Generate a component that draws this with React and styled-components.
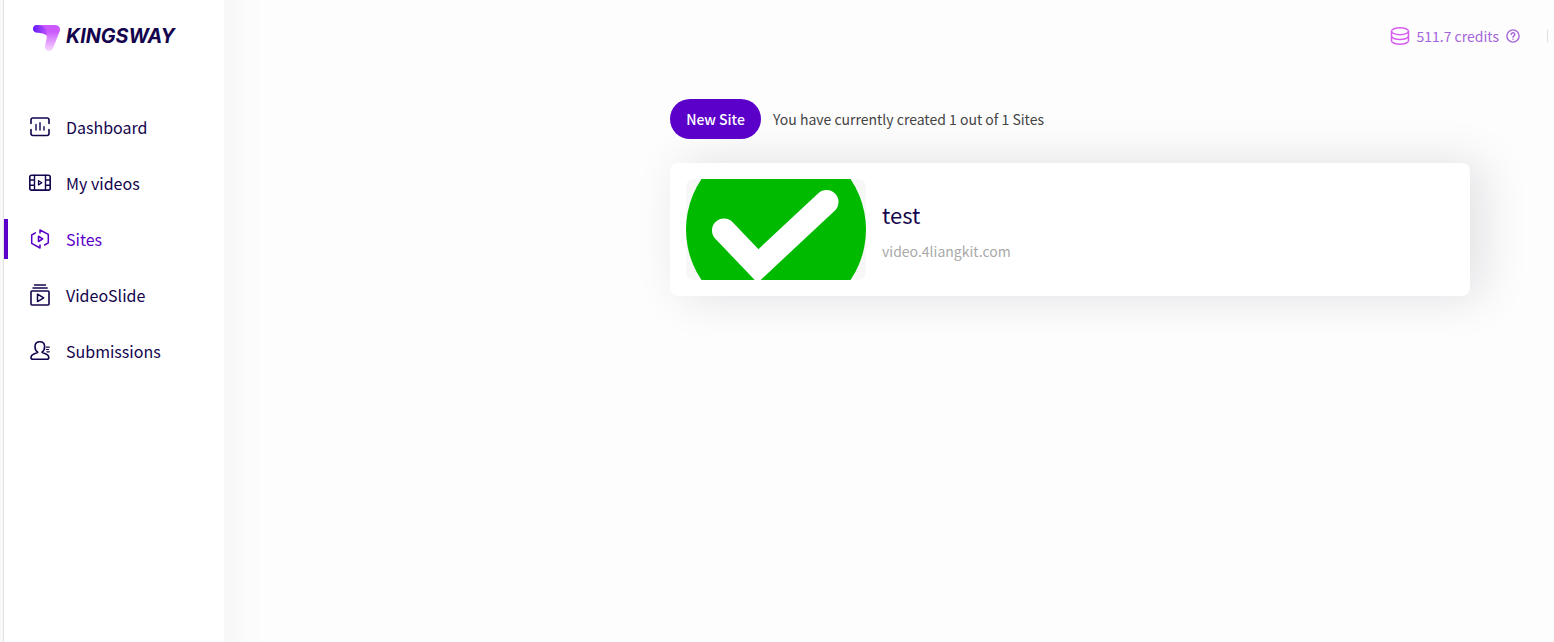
import React from 'react';
import styled, { createGlobalStyle } from 'styled-components';

const GlobalStyle = createGlobalStyle`
	* {
		box-sizing: border-box;
	}
	body {
		margin: 0;
		overflow: hidden;
		background-color: #fdfdfd;
		font-family: 'Noto Sans CJK SC', 'Noto Sans', sans-serif;
	}
	h2,
	p {
		margin: 0;
		font-weight: 400;
	}
`;
const WrapperStyled = styled.div`
	display: flex;
	height: 100vh;
	min-height: 642px;
	overflow: hidden;
	border-left: 3px solid #f8f8f8;
	background-color: #fdfdfd;
`;
const SidebarStyled = styled.aside`
	flex: 0 0 221px;
	margin: -60px 0;
	padding-top: 60px;
	border-left: 1px solid #e2e2e2;
	background-color: #fff;
	box-shadow: 10px 0 40px rgba(20, 20, 20, 0.034);
`;
const LogoStyled = styled.div`
	height: 99px;
	padding: 20px 0 0 26px;

	svg {
		display: block;
	}
`;
const NavStyled = styled.nav`
	display: flex;
	flex-direction: column;
	gap: 16px;
	padding-top: 8px;
	padding-bottom: 60px;
`;
const NavItemStyled = styled.a`
	display: flex;
	align-items: center;
	gap: 14px;
	height: 40px;
	padding-left: 20px;
	border-left: 4px solid ${({ $active }) => ($active ? '#5b00c9' : 'transparent')};
	color: ${({ $active }) => ($active ? '#5b00c9' : '#14044d')};
	font-size: 16px;
	line-height: 24px;
	cursor: pointer;

	svg {
		flex: none;
	}
`;
const ContentStyled = styled.div`
	flex: 1;
	display: flex;
	flex-direction: column;
`;
const HeaderStyled = styled.header`
	display: flex;
	justify-content: flex-end;
	align-items: center;
	height: 72px;
	padding-right: 6px;
`;
const CreditsStyled = styled.div`
	display: flex;
	align-items: center;
	gap: 6px;
	padding-right: 26px;
	color: #a565dc;
	font-size: 14px;
	line-height: 22px;

	svg:first-child {
		margin-right: 1px;
	}
`;
const DividerStyled = styled.span`
	width: 1px;
	height: 12px;
	background-color: #e0e0e3;
`;
const MainStyled = styled.main`
	width: 800px;
	margin: 27px 0 0 446px;
`;
const ToolbarStyled = styled.div`
	display: flex;
	align-items: center;
	gap: 12px;
	margin-bottom: 24px;
	color: #444;
	font-size: 14px;
	line-height: 22px;
`;
const ButtonStyled = styled.button`
	width: 91px;
	height: 40px;
	padding: 0;
	border: 0;
	border-radius: 20px;
	background-color: #5b00c9;
	color: #fff;
	font-family: inherit;
	font-size: 14px;
	font-weight: 500;
	line-height: 22px;
`;
const CardStyled = styled.section`
	display: flex;
	align-items: center;
	gap: 16px;
	height: 133px;
	padding: 16px;
	border-radius: 8px;
	background-color: #fff;
	box-shadow: 12px 0 48px rgba(20, 20, 43, 0.12);
`;
const ThumbStyled = styled.div`
	width: 180px;
	height: 101px;
	overflow: hidden;
	border-radius: 8px;
	background-color: #f7f7f8;

	svg {
		display: block;
	}
`;
const TitleStyled = styled.h2`
	margin-bottom: 10px;
	color: #14044d;
	font-size: 22px;
	line-height: 32px;
`;
const DomainStyled = styled.p`
	color: #a9a9a9;
	font-size: 14px;
	line-height: 22px;
`;

const Icon = ({ children, size = 24, width = 1.6 }) => (
	<svg
		width={size}
		height={size}
		viewBox={`0 0 ${size} ${size}`}
		fill="none"
		stroke="currentColor"
		strokeWidth={width}
		strokeLinecap="round"
		strokeLinejoin="round"
	>
		{children}
	</svg>
);

const DashboardIcon = () => (
	<Icon>
		<path d="M3 8.5V5Q3 3 5 3H19Q21 3 21 5V8.5M3 14.5V18.5Q3 20.5 5 20.5H19Q21 20.5 21 18.5V14.5" />
		<path d="M8 9.5V15M12 7.7V15M16 11.8V15" strokeWidth="1.4" />
	</Icon>
);
const VideosIcon = () => (
	<Icon>
		<rect x="1.8" y="4.3" width="20.4" height="14.8" rx="1.8" />
		<path d="M6.5 4.3V19.1M17.5 4.3V19.1M2 9H6.5M2 14.2H6.5M17.5 9H22M17.5 14.2H22" strokeWidth="1.4" />
		<path d="M10.5 9.7V13.9L13.8 11.8Z" strokeWidth="1.3" />
	</Icon>
);
const SitesIcon = () => (
	<Icon>
		<path d="M12 6V3L20.3 7.3V15.8L16.6 18M12 18V21L3.7 16.4V8L7.4 5.8" strokeWidth="1.5" />
		<path d="M10.5 9.3V14.5L14.7 11.9Z" />
	</Icon>
);
const SlideIcon = () => (
	<Icon>
		<rect x="3" y="8" width="18" height="14" rx="1" />
		<path d="M6.5 2H17.5M5 5H19.2" strokeWidth="1.4" />
		<path d="M9.5 11.2V18.6L15.7 14.9Z" strokeWidth="1.5" />
	</Icon>
);
const SubmissionsIcon = () => (
	<Icon>
		<path d="M9.8 13.2C7.7 12 7 9.8 7 7.5C7 4.3 9 2.8 11.8 2.8S16.6 4.3 16.6 7.5C16.6 9.8 15.9 12 14 13.2C14.5 14.5 20.8 14.3 20.8 18.5Q20.8 20.3 18.8 20.3H5Q3 20.3 3 18.5C3 14.3 9.3 14.5 9.8 13.2Z" />
		<path d="M18.3 8.2H21.3M18.3 10.5H20.6M18.8 12.8H21.3" strokeWidth="1.2" />
	</Icon>
);
const CoinsIcon = () => (
	<svg width="20" height="20" viewBox="0 0 20 20" fill="none" stroke="#d65cf0" strokeWidth="1.5">
		<ellipse cx="10" cy="5.2" rx="8.5" ry="3.5" />
		<path d="M1.5 5.2V14.8C1.5 16.8 5.3 18.3 10 18.3S18.5 16.8 18.5 14.8V5.2" />
		<path d="M1.5 10C1.5 12 5.3 13.5 10 13.5S18.5 12 18.5 10" />
	</svg>
);
const HelpIcon = () => (
	<Icon size={16} width={1.4}>
		<circle cx="8" cy="8" r="6.1" />
		<path d="M6.2 6.5C6.2 4.1 9.9 4.2 9.8 6.5C9.8 7.8 8 7.9 8 9.2M8 11.2V11.3" />
	</Icon>
);

const Logo = () => (
	<svg width="160" height="36" viewBox="0 0 160 36">
		<defs>
			<linearGradient id="fold" x1="0" y1="0" x2="0" y2="1">
				<stop offset="0.25" stopColor="#cb59fc" />
				<stop offset="1" stopColor="#f7d8ff" />
			</linearGradient>
			<linearGradient id="wing" x1="0" y1="0" x2="1" y2="0">
				<stop offset="0" stopColor="#6419ff" />
				<stop offset="1" stopColor="#b852fc" />
			</linearGradient>
		</defs>
		<path d="M6 5H25C29 5 31 8 29.6 11.6L23.3 27.5C21.3 33 15.2 31 15 27.5C14.9 23 17.2 19.7 16.8 15.3L3.2 9Z" fill="url(#fold)" />
		<path d="M6.5 5C2.5 5 1.8 10.7 5.2 12.2C9 13.7 14.6 12.2 16.8 15.8C17.7 9 14.3 5 6.5 5Z" fill="url(#wing)" />
		<text
			x="36"
			y="23"
			fill="#14044d"
			fontFamily="Inter, sans-serif"
			fontSize="19.5"
			fontWeight="700"
			fontStyle="italic"
			textLength="109"
			lengthAdjust="spacingAndGlyphs"
		>
			KINGSWAY
		</text>
	</svg>
);

const menu = [
	{ label: 'Dashboard', icon: DashboardIcon },
	{ label: 'My videos', icon: VideosIcon },
	{ label: 'Sites', icon: SitesIcon, active: true },
	{ label: 'VideoSlide', icon: SlideIcon },
	{ label: 'Submissions', icon: SubmissionsIcon },
];

const SiteCard = ({ data }) => (
	<CardStyled>
		<ThumbStyled>
			<svg width="180" height="101" viewBox="0 0 180 101">
				<circle cx="90" cy="50.5" r="90" fill="#00ba00" />
				<path d="M38 51.5L72 87L140.5 23" fill="none" stroke="#fff" strokeWidth="24" strokeLinecap="round" />
			</svg>
		</ThumbStyled>
		<div>
			<TitleStyled>{data.name}</TitleStyled>
			<DomainStyled>{data.domain}</DomainStyled>
		</div>
	</CardStyled>
);

const App = () => {
	return (
		<WrapperStyled>
			<GlobalStyle />
			<SidebarStyled>
				<LogoStyled>
					<Logo />
				</LogoStyled>
				<NavStyled>
					{menu.map(({ label, icon: ItemIcon, active }) => (
						<NavItemStyled key={label} $active={active}>
							<ItemIcon />
							<span>{label}</span>
						</NavItemStyled>
					))}
				</NavStyled>
			</SidebarStyled>
			<ContentStyled>
				<HeaderStyled>
					<CreditsStyled>
						<CoinsIcon />
						<span>511.7 credits</span>
						<HelpIcon />
					</CreditsStyled>
					<DividerStyled />
				</HeaderStyled>
				<MainStyled>
					<ToolbarStyled>
						<ButtonStyled>New Site</ButtonStyled>
						<p>You have currently created 1 out of 1 Sites</p>
					</ToolbarStyled>
					<SiteCard data={{ name: 'test', domain: 'video.4liangkit.com' }} />
				</MainStyled>
			</ContentStyled>
		</WrapperStyled>
	);
};

export default App;
